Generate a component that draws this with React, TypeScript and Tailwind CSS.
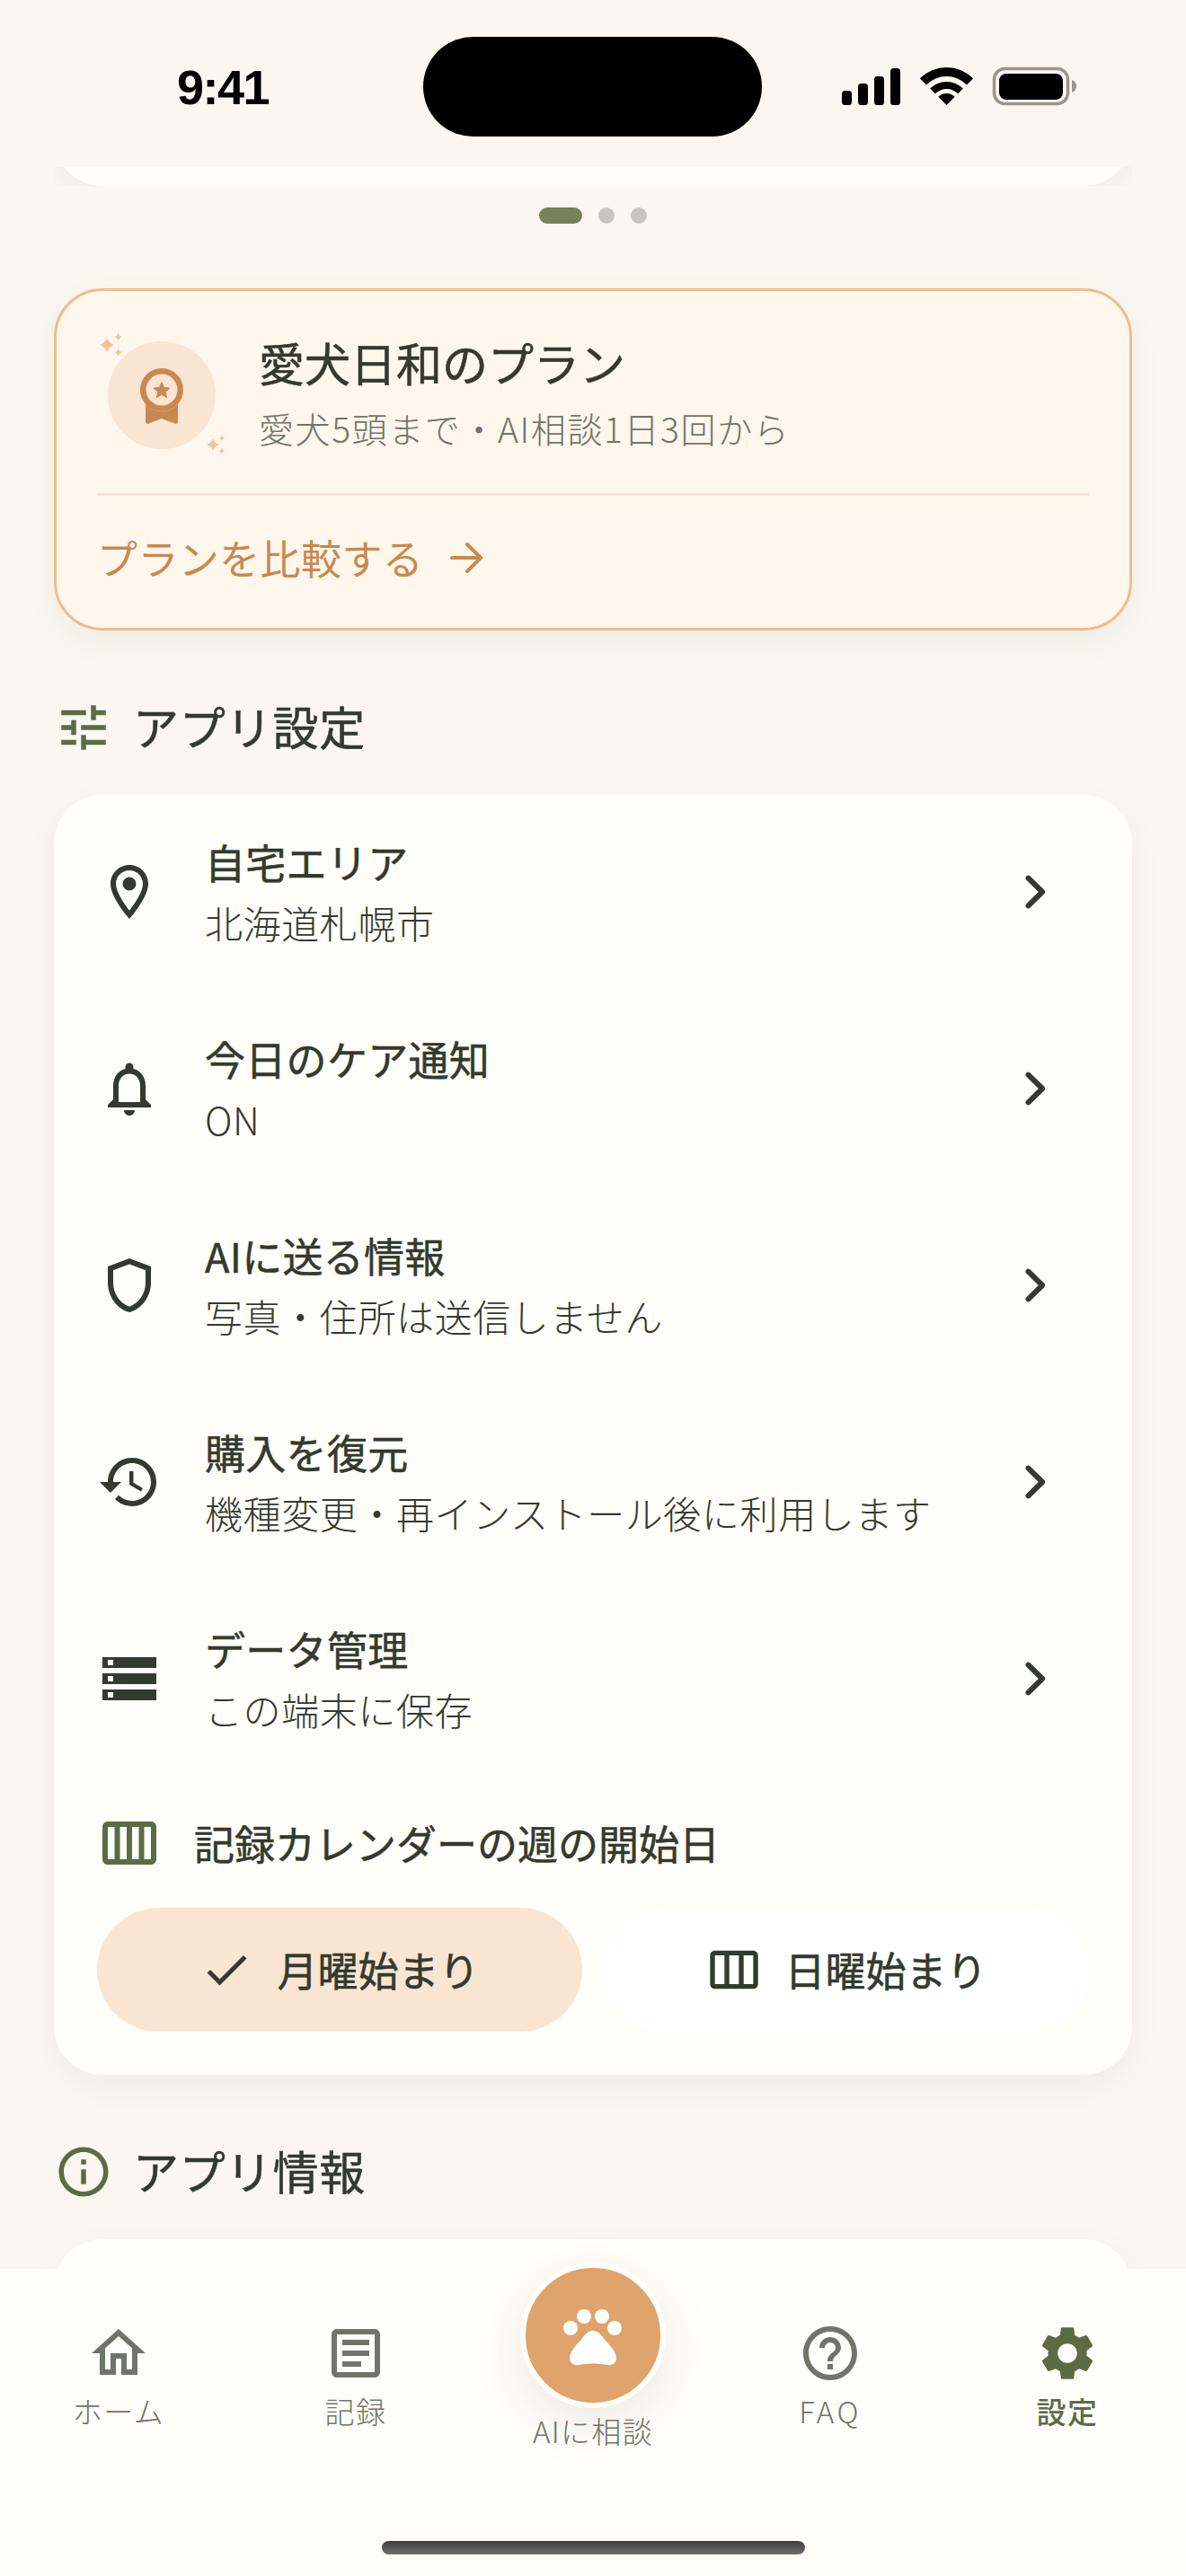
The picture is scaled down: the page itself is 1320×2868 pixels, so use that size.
const JP = "font-['Noto_Sans_CJK_JP','Noto_Sans',sans-serif]";
const TITLE = "font-normal [-webkit-text-stroke:0.55px_#333a2e]";

const P = ({ d, size = 72, color = '#333a2e', className = '' }: { d: string; size?: number; color?: string; className?: string }) => (
  <svg width={size} height={size} viewBox="0 0 24 24" fill={color} className={`shrink-0 ${className}`}>
    <path d={d} />
  </svg>
);

const icons = {
  tune: 'M3 17v2h6v-2H3zM3 5v2h10V5H3zm10 16v-2h8v-2h-8v-2h-2v6h2zM7 9v2H3v2h4v2h2V9H7zm14 4v-2H11v2h10zm-6-4h2V7h4V5h-4V3h-2v6z',
  info: 'M11 7h2v2h-2zm0 4h2v6h-2zm1-9C6.48 2 2 6.48 2 12s4.48 10 10 10 10-4.48 10-10S17.52 2 12 2zm0 18c-4.41 0-8-3.59-8-8s3.59-8 8-8 8 3.59 8 8-3.59 8-8 8z',
  pin: 'M12 2C8.13 2 5 5.13 5 9c0 5.25 7 13 7 13s7-7.75 7-13c0-3.87-3.13-7-7-7zM7 9c0-2.76 2.24-5 5-5s5 2.24 5 5c0 2.88-2.88 7.19-5 9.88C9.92 16.21 7 11.85 7 9zM12 6.500a2.500 2.500 0 1 0 0 5 2.500 2.500 0 0 0 0-5z',
  bell: 'M12 22c1.1 0 2-.9 2-2h-4c0 1.1.9 2 2 2zm6-6v-5c0-3.07-1.63-5.64-4.5-6.32V4c0-.83-.67-1.5-1.5-1.5s-1.5.67-1.5 1.5v.68C7.64 5.36 6 7.92 6 11v5l-2 2v1h16v-1l-2-2zm-2 1H8v-6c0-2.48 1.51-4.5 4-4.5s4 2.02 4 4.5v6z',
  shield: 'M12 2 4 5v6.09c0 5.05 3.41 9.76 8 10.91 4.59-1.15 8-5.86 8-10.91V5l-8-3zm6 9.09c0 4-2.55 7.7-6 8.83-3.45-1.13-6-4.82-6-8.83v-4.7l6-2.25 6 2.25v4.7z',
  history: 'M13 3c-4.97 0-9 4.03-9 9H1l3.89 3.89.07.14L9 12H6c0-3.87 3.13-7 7-7s7 3.13 7 7-3.13 7-7 7c-1.93 0-3.68-.79-4.94-2.06l-1.42 1.42C8.27 19.99 10.51 21 13 21c4.97 0 9-4.03 9-9s-4.03-9-9-9zm-1 5v5l4.28 2.54.72-1.21-3.5-2.08V8H12z',
  storage: 'M2 20h20v-4H2v4zm2-3h2v2H4v-2zM2 4v4h20V4H2zm4 3H4V5h2v2zm-4 7h20v-4H2v4zm2-3h2v2H4v-2z',
  week4: 'M20 4H4c-1.1 0-1.99.9-1.99 2L2 18c0 1.1.9 2 2 2h16c1.1 0 2-.9 2-2V6c0-1.1-.9-2-2-2zM13 6h2.500v12H13V6zm-2 12H8.500V6H11v12zM4 6h2.500v12H4V6zm16 12h-2.500V6H20v12z',
  week3: 'M20 4H4c-1.1 0-2 .9-2 2v12c0 1.1.9 2 2 2h16c1.1 0 2-.9 2-2V6c0-1.1-.9-2-2-2zM8 18H4V6h4v12zm6 0h-4V6h4v12zm6 0h-4V6h4v12z',
  check: 'M9 16.17 4.83 12l-1.42 1.41L9 19 21 7l-1.41-1.41z',
  home: 'M12 5.69l5 4.5V18h-2v-6H9v6H7v-7.81l5-4.5M12 3L2 12h3v8h6v-6h2v6h6v-8h3L12 3z',
  article: 'M19 5v14H5V5h14m0-2H5c-1.1 0-2 .9-2 2v14c0 1.1.9 2 2 2h14c1.1 0 2-.9 2-2V5c0-1.1-.9-2-2-2zM14 17H7v-2h7v2zm3-4H7v-2h10v2zm0-4H7V7h10v2z',
  help: 'M11 18h2v-2h-2v2zm1-16C6.48 2 2 6.48 2 12s4.48 10 10 10 10-4.48 10-10S17.52 2 12 2zm0 18c-4.41 0-8-3.59-8-8s3.59-8 8-8 8 3.59 8 8-3.59 8-8 8zm0-14c-2.21 0-4 1.79-4 4h2c0-1.1.9-2 2-2s2 .9 2 2c0 2-3 1.75-3 5h2c0-2.25 3-2.5 3-5 0-2.21-1.79-4-4-4z',
  gear: 'M19.14 12.94c.04-.3.06-.61.06-.94 0-.32-.02-.64-.07-.94l2.03-1.58c.18-.14.23-.41.12-.61l-1.92-3.32c-.12-.22-.37-.29-.59-.22l-2.39.96c-.5-.38-1.03-.7-1.62-.94l-.36-2.54c-.04-.24-.24-.41-.48-.41h-3.84c-.24 0-.43.17-.47.41l-.36 2.54c-.59.24-1.13.57-1.62.94l-2.39-.96c-.22-.08-.47 0-.59.22L2.74 8.87c-.12.21-.08.47.12.61l2.03 1.58c-.05.3-.09.63-.09.94s.02.64.07.94l-2.03 1.58c-.18.14-.23.41-.12.61l1.92 3.32c.12.22.37.29.59.22l2.39-.96c.5.38 1.03.7 1.62.94l.36 2.54c.05.24.24.41.48.41h3.84c.24 0 .44-.17.47-.41l.36-2.54c.59-.24 1.13-.56 1.62-.94l2.39.96c.22.08.47 0 .59-.22l1.92-3.32c.12-.22.07-.47-.12-.61l-2.01-1.58zM12 15.6c-1.98 0-3.6-1.62-3.6-3.6s1.62-3.6 3.6-3.6 3.6 1.62 3.6 3.6-1.62 3.6-3.6 3.6z',
};

const rows = [
  { icon: icons.pin, title: '自宅エリア', sub: '北海道札幌市' },
  { icon: icons.bell, title: '今日のケア通知', sub: 'ON' },
  { icon: icons.shield, title: 'AIに送る情報', sub: '写真・住所は送信しません' },
  { icon: icons.history, title: '購入を復元', sub: '機種変更・再インストール後に利用します' },
  { icon: icons.storage, title: 'データ管理', sub: 'この端末に保存' },
];

const Sparkle = ({ cx, cy, r }: { cx: number; cy: number; r: number }) => {
  const k = r * 0.24;
  return (
    <path d={`M${cx} ${cy - r}Q${cx + k} ${cy - k} ${cx + r} ${cy}Q${cx + k} ${cy + k} ${cx} ${cy + r}Q${cx - k} ${cy + k} ${cx - r} ${cy}Q${cx - k} ${cy - k} ${cx} ${cy - r}Z`} />
  );
};

function SectionHeader({ icon, title }: { icon: string; title: string }) {
  return (
    <div className="flex items-center gap-[22px] h-[66px]">
      <P d={icon} size={66} color="#5c6b46" />
      <span className={`text-[51px] leading-[66px] pb-1 tracking-[0.8px] text-[#333a2e] ${TITLE}`}>{title}</span>
    </div>
  );
}

function Row({ icon, title, sub }: { icon: string; title: string; sub: string }) {
  return (
    <div className="h-[219px] flex items-center pl-12 pr-[72px]">
      <P d={icon} className="-mt-1" />
      <div className="ml-12 flex-1 flex flex-col -mt-1.5">
        <span className={`text-[45px] leading-[66px] tracking-[0.3px] text-[#333a2e] ${TITLE}`}>{title}</span>
        <span className="mt-1 text-[42px] leading-[60px] tracking-[0.6px] font-light text-[#333a2e]">{sub}</span>
      </div>
      <svg width="72" height="72" viewBox="0 0 24 24" fill="none" stroke="#333a2e" strokeWidth="2" strokeLinecap="round" strokeLinejoin="round" className="shrink-0 -mt-1">
        <path d="M9.500 6.900L14.700 12L9.500 17.100" />
      </svg>
    </div>
  );
}

function Tab({ icon, label, active, tracking = 'tracking-[1.5px]' }: { icon: string; label: string; active?: boolean; tracking?: string }) {
  return (
    <div className="flex flex-col items-center pt-[58px]">
      <P d={icon} color={active ? '#5c6b46' : '#6f7568'} />
      <span className={`text-[33px] leading-[48px] mt-1 ${tracking} ${active ? 'font-medium text-[#5c6b46]' : 'font-light text-[#6f7568]'}`}>{label}</span>
    </div>
  );
}

export default function App() {
  return (
    <div className={`relative w-[1320px] h-[2868px] overflow-hidden bg-[#faf6f0] ${JP}`}>
      {/* Status bar */}
      <div className="h-[186px] relative z-10 bg-[#faf6f0]">
        <span className="absolute left-[197px] top-[70px] text-[54px] leading-[54px] tracking-[-1.5px] font-bold text-black font-['Liberation_Sans',sans-serif]">9:41</span>
        <div className="absolute left-[471px] top-[41px] w-[377px] h-[111px] rounded-full bg-black" />
        <svg className="absolute left-[936px] top-[74px]" width="264" height="44" viewBox="0 0 264 44">
          <rect x="1" y="27" width="11" height="16" rx="3.500" fill="#000" />
          <rect x="19" y="19" width="11" height="24" rx="3.500" fill="#000" />
          <rect x="37" y="11" width="11" height="32" rx="3.500" fill="#000" />
          <rect x="55" y="2" width="11" height="41" rx="3.500" fill="#000" />
          <path d="M87.800 13.300A42 42 0 0 1 147.200 13.300L140.100 20.400A32 32 0 0 0 94.900 20.400Z" fill="#000" />
          <path d="M99.100 24.600A26 26 0 0 1 135.900 24.600L130.200 30.300A18 18 0 0 0 104.800 30.300Z" fill="#000" />
          <path d="M108.300 33.800A13 13 0 0 1 126.700 33.800L117.500 43Z" fill="#000" />
          <rect x="170.500" y="2.500" width="82" height="39" rx="12" fill="none" stroke="#9a968e" strokeWidth="3.500" />
          <rect x="176" y="8" width="71" height="29" rx="8" fill="#000" />
          <path d="M257 15Q262 17 262 22Q262 27 257 29Z" fill="#9a968e" />
        </svg>
      </div>

      {/* Scrolling content */}
      <div className="absolute left-0 right-0 top-[186px] h-[2340px] overflow-hidden">
        <div className="px-[60px]">
          {/* Previous card's tail */}
          <div className="h-[21px] overflow-hidden relative">
            <div className="absolute left-0 right-0 bottom-0 h-[120px] rounded-[54px] bg-[#fffef9] shadow-[0_12px_36px_rgba(60,50,30,0.05)]" />
          </div>

          {/* Dots */}
          <div className="flex justify-center items-center gap-[18px] mt-6 h-[18px]">
            <span className="w-12 h-[18px] rounded-full bg-[#768259]" />
            <span className="w-[18px] h-[18px] rounded-full bg-[#c6c6bc]" />
            <span className="w-[18px] h-[18px] rounded-full bg-[#c6c6bc]" />
          </div>

          {/* Plan card */}
          <div className="mt-[72px] h-[381px] rounded-[54px] border-[3px] border-[#eebd8e] bg-[#fff6ec] shadow-[0_12px_36px_rgba(60,50,30,0.05)] px-[45px]">
            <div className="h-[225px] flex items-center">
              <div className="relative ml-3 mt-[7px] w-[120px] h-[120px] rounded-full bg-[#f9e5d1] shrink-0">
                <svg width="120" height="120" viewBox="0 0 120 120" fill="#c98850" className="block">
                  <path fillRule="evenodd" d="M60 30a24 24 0 1 1 0 48a24 24 0 1 1 0-48zM60 36.500a17.500 17.500 0 1 0 0 35a17.500 17.500 0 1 0 0-35z" />
                  <path d="M42 70V89.500Q42 92.500 45 91.700L60 86L75 91.700Q78 92.500 78 89.500V70Q70 78 60 78Q50 78 42 70Z" />
                  <path d="M60 45.500L62.600 51.400L69 52L64.200 56.200L65.600 62.500L60 59.200L54.400 62.500L55.800 56.200L51 52L57.400 51.400Z" stroke="#c98850" strokeWidth="1" strokeLinejoin="round" />
                </svg>
                <svg className="absolute -left-5 -top-5" width="160" height="160" viewBox="0 0 160 160" fill="#f0c49a">
                  <Sparkle cx={19} cy={24} r={8} />
                  <Sparkle cx={31.7} cy={15} r={4} />
                  <Sparkle cx={31.7} cy={32.3} r={4} />
                  <Sparkle cx={137} cy={135} r={7} />
                  <Sparkle cx={147} cy={127.7} r={3.2} />
                  <Sparkle cx={147} cy={142} r={3.2} />
                </svg>
              </div>
              <div className="ml-12 flex flex-col">
                <span className={`text-[51px] leading-[72px] text-[#333a2e] ${TITLE}`}>愛犬日和のプラン</span>
                <span className="mt-[7px] text-[39px] leading-[60px] font-light text-[#6f7568] tracking-[1.6px]">愛犬5頭まで・AI相談1日3回から</span>
              </div>
            </div>
            <div className="h-[3px] bg-[#f9e5d1]" />
            <div className="h-[147px] pb-[9px] flex items-center gap-[30px]">
              <span className="text-[45px] leading-[60px] tracking-[0.4px] text-[#c98850]">プランを比較する</span>
              <svg width="36" height="36" viewBox="0 0 36 36" fill="none" stroke="#c98850" strokeWidth="4" strokeLinecap="round" strokeLinejoin="round">
                <path d="M2 18H34M19 3L34 18L19 33" />
              </svg>
            </div>
          </div>

          {/* App settings */}
          <div className="mt-[75px]"><SectionHeader icon={icons.tune} title="アプリ設定" /></div>

          <div className="mt-[42px] rounded-[54px] bg-[#fffef9] shadow-[0_12px_36px_rgba(60,50,30,0.05)]">
            {rows.map((r) => <Row key={r.title} {...r} />)}
            <div className="flex items-center pl-12 h-[72px] mt-[36px]">
              <P d={icons.week4} color="#5c6b46" />
              <span className={`ml-9 text-[45px] leading-[66px] text-[#333a2e] ${TITLE}`}>記録カレンダーの週の開始日</span>
            </div>
            <div className="grid grid-cols-2 gap-6 px-12 pt-[36px] pb-12">
              <div className="h-[138px] rounded-full bg-[#f9e5d1] flex items-center justify-center gap-[26px]">
                <P d={icons.check} size={60} />
                <span className={`text-[45px] text-[#333a2e] ${TITLE}`}>月曜始まり</span>
              </div>
              <div className="h-[138px] rounded-full bg-white flex items-center justify-center gap-6">
                <P d={icons.week3} size={64} />
                <span className={`text-[45px] text-[#333a2e] ${TITLE}`}>日曜始まり</span>
              </div>
            </div>
          </div>

          {/* App info */}
          <div className="mt-[75px]"><SectionHeader icon={icons.info} title="アプリ情報" /></div>
          <div className="mt-[42px] h-[200px] rounded-[54px] bg-[#fffef9] shadow-[0_12px_36px_rgba(60,50,30,0.05)]" />
        </div>
      </div>

      {/* Tab bar */}
      <div className="absolute left-0 right-0 bottom-0 h-[342px] bg-[#fffef9] grid grid-cols-5">
        <Tab icon={icons.home} label="ホーム" />
        <Tab icon={icons.article} label="記録" />
        <div className="relative flex flex-col items-center">
          <div className="absolute -top-[7px] w-[162px] h-[162px] rounded-full border-[6px] border-[#fffef9] bg-[#dfa36c] flex items-center justify-center shadow-[0_18px_60px_rgba(60,50,30,0.1)]">
            <svg width="78" height="78" viewBox="0 0 78 78" fill="#ffffff">
              <circle cx="14" cy="31" r="8" />
              <circle cx="29" cy="18" r="8" />
              <circle cx="49" cy="18" r="8" />
              <circle cx="63" cy="31" r="8" />
              <path d="M39 34C44 34 47 37 50 41C54 47 65 56 65 64C65 70 60 73 55 72C48 71 44 70.500 39 70.500C34 70.500 30 71 23 72C18 73 13 70 13 64C13 56 24 47 28 41C31 37 34 34 39 34Z" />
            </svg>
          </div>
          <span className="absolute top-[156px] text-[33px] leading-[48px] font-light text-[#6f7568] tracking-[1.3px]">AIに相談</span>
        </div>
        <Tab icon={icons.help} label="FAQ" tracking="tracking-[3.5px]" />
        <Tab icon={icons.gear} label="設定" active />
      </div>
      <div className="absolute left-[425px] top-[2829px] w-[471px] h-[15px] rounded-full bg-linear-to-b from-[#3c3c3c] to-[#707070]" />
    </div>
  );
}
